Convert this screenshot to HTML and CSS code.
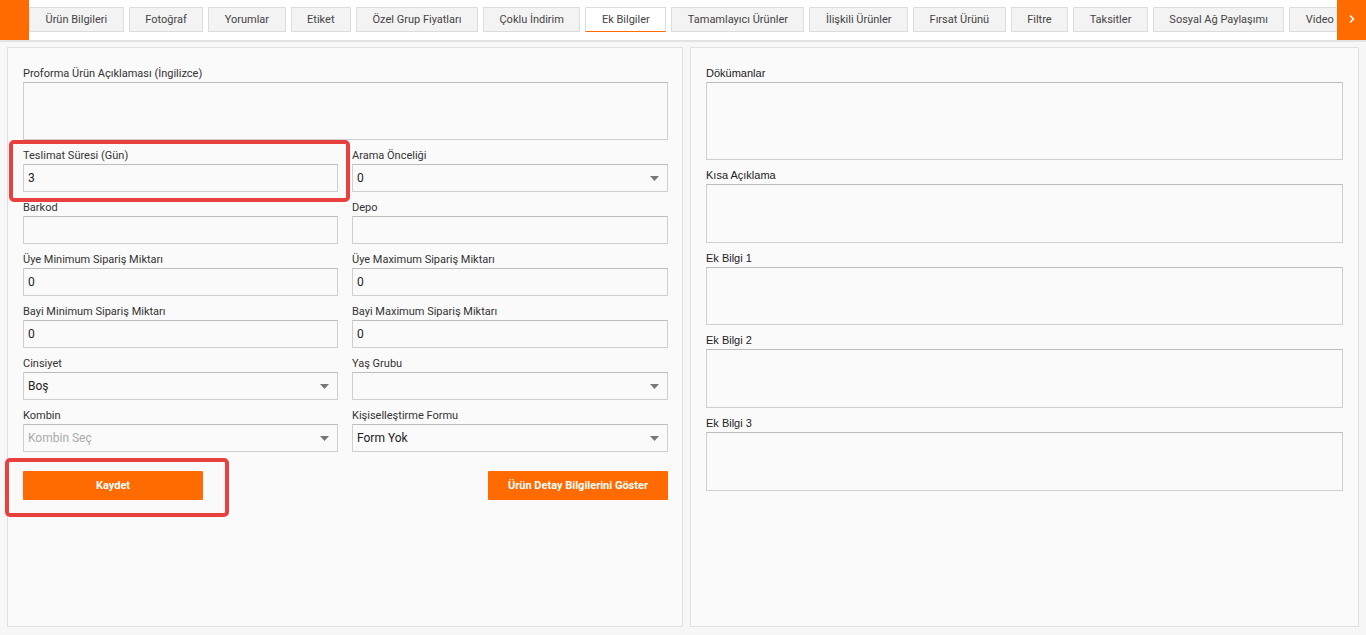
FILE: index.html
```html
<!DOCTYPE html>
<html lang="tr">
<head>
<meta charset="utf-8">
<title>Ek Bilgiler</title>
<link rel="stylesheet" href="styles.css">
</head>
<body>
<header class="topbar">
  <div class="edge"></div>
  <nav class="tabs">
    <span class="tab">Ürün Bilgileri</span>
    <span class="tab">Fotoğraf</span>
    <span class="tab">Yorumlar</span>
    <span class="tab">Etiket</span>
    <span class="tab">Özel Grup Fiyatları</span>
    <span class="tab">Çoklu İndirim</span>
    <span class="tab active">Ek Bilgiler</span>
    <span class="tab">Tamamlayıcı Ürünler</span>
    <span class="tab">İlişkili Ürünler</span>
    <span class="tab">Fırsat Ürünü</span>
    <span class="tab">Filtre</span>
    <span class="tab">Taksitler</span>
    <span class="tab">Sosyal Ağ Paylaşımı</span>
    <span class="tab">Video</span>
  </nav>
  <div class="edge next">
    <svg width="8" height="10" viewBox="0 0 8 10"><polyline points="2,1.5 5.5,5 2,8.5" fill="none" stroke="#fff" stroke-width="1.6"/></svg>
  </div>
</header>

<main class="content">
  <section class="panel left">
    <div class="field">
      <label class="lbl">Proforma Ürün Açıklaması (İngilizce)</label>
      <div class="area"></div>
    </div>
    <div class="grid">
      <div class="field">
        <label class="lbl">Teslimat Süresi (Gün)</label>
        <div class="input">3</div>
      </div>
      <div class="field">
        <label class="lbl">Arama Önceliği</label>
        <div class="input select"><span>0</span><svg class="arrow" width="9" height="5" viewBox="0 0 9 5"><polygon points="0,0 9,0 4.5,5" fill="#777"/></svg></div>
      </div>
      <div class="field">
        <label class="lbl">Barkod</label>
        <div class="input"></div>
      </div>
      <div class="field">
        <label class="lbl">Depo</label>
        <div class="input"></div>
      </div>
      <div class="field">
        <label class="lbl">Üye Minimum Sipariş Miktarı</label>
        <div class="input">0</div>
      </div>
      <div class="field">
        <label class="lbl">Üye Maximum Sipariş Miktarı</label>
        <div class="input">0</div>
      </div>
      <div class="field">
        <label class="lbl">Bayi Minimum Sipariş Miktarı</label>
        <div class="input">0</div>
      </div>
      <div class="field">
        <label class="lbl">Bayi Maximum Sipariş Miktarı</label>
        <div class="input">0</div>
      </div>
      <div class="field">
        <label class="lbl">Cinsiyet</label>
        <div class="input select"><span>Boş</span><svg class="arrow" width="9" height="5" viewBox="0 0 9 5"><polygon points="0,0 9,0 4.5,5" fill="#777"/></svg></div>
      </div>
      <div class="field">
        <label class="lbl">Yaş Grubu</label>
        <div class="input select"><span></span><svg class="arrow" width="9" height="5" viewBox="0 0 9 5"><polygon points="0,0 9,0 4.5,5" fill="#777"/></svg></div>
      </div>
      <div class="field">
        <label class="lbl">Kombin</label>
        <div class="input select placeholder"><span>Kombin Seç</span><svg class="arrow" width="9" height="5" viewBox="0 0 9 5"><polygon points="0,0 9,0 4.5,5" fill="#777"/></svg></div>
      </div>
      <div class="field">
        <label class="lbl">Kişiselleştirme Formu</label>
        <div class="input select"><span>Form Yok</span><svg class="arrow" width="9" height="5" viewBox="0 0 9 5"><polygon points="0,0 9,0 4.5,5" fill="#777"/></svg></div>
      </div>
    </div>
    <div class="actions">
      <button class="btn">Kaydet</button>
      <button class="btn">Ürün Detay Bilgilerini Göster</button>
    </div>
    <div class="highlight hl-teslimat"></div>
    <div class="highlight hl-kaydet"></div>
  </section>

  <section class="panel right">
    <div class="rfield">
      <label class="rlbl">Dökümanlar</label>
      <div class="area tall"></div>
    </div>
    <div class="rfield">
      <label class="rlbl">Kısa Açıklama</label>
      <div class="area"></div>
    </div>
    <div class="rfield">
      <label class="rlbl">Ek Bilgi 1</label>
      <div class="area short"></div>
    </div>
    <div class="rfield">
      <label class="rlbl">Ek Bilgi 2</label>
      <div class="area"></div>
    </div>
    <div class="rfield">
      <label class="rlbl">Ek Bilgi 3</label>
      <div class="area"></div>
    </div>
  </section>
</main>
</body>
</html>
```

FILE: styles.css
```css
* { box-sizing: border-box; }

body {
  margin: 0;
  background: #f7f7f7;
  font-family: Roboto, "Noto Sans", Arial, sans-serif;
  color: #333;
}

.topbar {
  display: flex;
  height: 42px;
  background: #fff;
  border-bottom: 2px solid #e3e3e3;
}

.edge {
  width: 29px;
  flex: 0 0 29px;
  background: #ff6b00;
}

.edge.next {
  display: flex;
  align-items: center;
  justify-content: center;
  padding-bottom: 2px;
}

.tabs {
  flex: 1;
  display: flex;
  padding-top: 7px;
  overflow: hidden;
  white-space: nowrap;
}

.tab {
  flex: 0 0 auto;
  height: 25px;
  line-height: 23px;
  padding: 0 15.5px;
  margin-right: 5px;
  border: 1px solid #dcdcdc;
  background: #f3f3f3;
  font-size: 11px;
  color: #444;
}

.tab.active {
  background: #fff;
  border-bottom: 1px solid #ff6b00;
}

.content {
  display: grid;
  grid-template-columns: 676px 669px;
  gap: 7px;
  padding: 5px 7px 0;
}

.panel {
  position: relative;
  height: 580px;
  background: #fafafa;
  border: 1px solid #e0e0e0;
}

.panel.left {
  padding: 18px 14px 0 15px;
}

.panel.right {
  padding: 18px 15px 0 15px;
}

.field {
  display: flex;
  flex-direction: column;
  margin-bottom: 8px;
}

.lbl {
  display: block;
  font-size: 11px;
  line-height: 14px;
  padding-top: 1px;
  margin-bottom: 1px;
  color: #333;
}

.area {
  height: 58px;
  background: #fafafa;
  border: 1px solid #cfcfcf;
  border-top-color: #bdbdbd;
}

.grid {
  display: grid;
  grid-template-columns: 315px 316px;
  column-gap: 14px;
}

.input {
  height: 28px;
  line-height: 26px;
  padding: 0 4px;
  font-size: 12px;
  color: #222;
  background: #fafafa;
  border: 1px solid #cfcfcf;
  border-top-color: #bdbdbd;
}

.select {
  display: flex;
  align-items: center;
  justify-content: space-between;
  padding-right: 8px;
}

.placeholder span {
  color: #aaa;
}

.actions {
  display: flex;
  justify-content: space-between;
  margin-top: 11px;
}

.btn {
  width: 180px;
  height: 29px;
  border: 0;
  border-radius: 1px;
  background: #ff6b00;
  color: #fff;
  font-family: Roboto, "Noto Sans", Arial, sans-serif;
  font-weight: 700;
  font-size: 11px;
  padding: 0;
}

.highlight {
  position: absolute;
  border: 4px solid #e8403f;
  border-radius: 5px;
}

.hl-teslimat {
  left: 1px;
  top: 92px;
  width: 341px;
  height: 62px;
}

.hl-kaydet {
  left: -3px;
  top: 410px;
  width: 224px;
  height: 59px;
}

.rfield {
  display: flex;
  flex-direction: column;
  margin-bottom: 8px;
}

.rlbl {
  display: block;
  font-family: "Liberation Sans", Arial, sans-serif;
  font-size: 11px;
  line-height: 14px;
  margin-bottom: 2px;
  color: #222;
}

.right .area {
  height: 59px;
}

.right .area.short {
  height: 58px;
}

.right .area.tall {
  height: 78px;
}
```
